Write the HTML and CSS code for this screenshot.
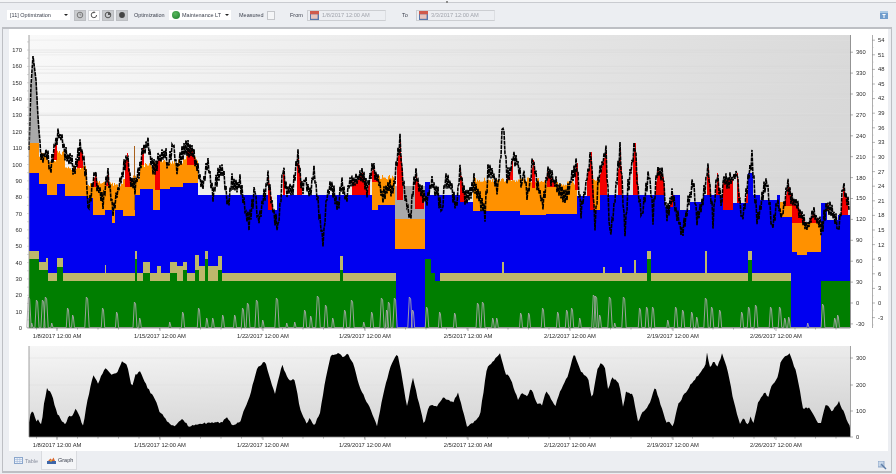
FILE: index.html
```html
<!DOCTYPE html>
<html lang="en">
<head>
  <meta charset="UTF-8" />
  <title>Optimization Graph</title>
  <link rel="stylesheet" href="styles.css">
</head>
<body>
  <div class="app">
    <div class="top-strip"><span class="grip"></span></div>

    <div class="toolbar">
      <div class="combo combo-type">
        <span>[11] Optimization</span>
        <span class="caret"></span>
      </div>

      <div class="btn-group">
        <button class="tool-btn pressed"><svg width="8" height="8" viewBox="0 0 8 8"><circle cx="4" cy="4" r="2.8" fill="none" stroke="#777" stroke-width="1"/><path d="M4 2.4V4H5.4" fill="none" stroke="#777" stroke-width=".7"/></svg></button>
        <button class="tool-btn"><svg width="8" height="8" viewBox="0 0 8 8"><path d="M6.6 4A2.7 2.7 0 1 1 4 1.3" fill="none" stroke="#555" stroke-width="1"/><path d="M3.6 .2L5.6 1.3 3.6 2.6z" fill="#555"/></svg></button>
        <button class="tool-btn pressed"><svg width="8" height="8" viewBox="0 0 8 8"><circle cx="4" cy="4" r="2.8" fill="none" stroke="#555" stroke-width="1"/><path d="M4 4V1.2A2.8 2.8 0 0 1 6.8 4z" fill="#555"/></svg></button>
        <button class="tool-btn pressed"><svg width="8" height="8" viewBox="0 0 8 8"><circle cx="4" cy="4" r="2.9" fill="#444"/></svg></button>
      </div>

      <label class="tool-label label-opt">Optimization</label>
      <div class="combo combo-model">
        <span class="ball"></span>
        <span>Maintenance LT</span>
        <span class="caret"></span>
      </div>

      <label class="tool-label label-measured">Measured</label>
      <span class="check"></span>

      <label class="tool-label label-from">From</label>
      <div class="date-box">
        <svg class="cal" width="9" height="9" viewBox="0 0 9 9"><rect width="9" height="9" fill="#5878ac"/><rect width="9" height="3.4" fill="#cf5a4c"/><rect x="1" y="3.4" width="6.6" height="4.4" fill="#e9c4bc"/></svg>
        <span>1/8/2017 12:00 AM</span>
      </div>

      <label class="tool-label label-to">To</label>
      <div class="date-box">
        <svg class="cal" width="9" height="9" viewBox="0 0 9 9"><rect width="9" height="9" fill="#5878ac"/><rect width="9" height="3.4" fill="#cf5a4c"/><rect x="1" y="3.4" width="6.6" height="4.4" fill="#e9c4bc"/></svg>
        <span>3/3/2017 12:00 AM</span>
      </div>

      <svg class="share" width="8" height="8" viewBox="0 0 8 8"><rect width="8" height="8" fill="#6f9ccc"/><rect y="0" width="8" height="2" fill="#a9c8e4"/><path d="M2.4 3H5.6V4H4.5V7H3.5V4H2.4z" fill="#fff"/></svg>
    </div>

    <div class="main">
      <svg id="chart" class="chart" width="879" height="422" viewBox="9 29 879 422"></svg>

      <div class="tabs">
        <div class="tab">
          <svg width="9" height="7" viewBox="0 0 9 7"><rect x=".5" y=".5" width="8" height="6" fill="#eef3fa" stroke="#8aa6cc"/><path d="M.5 2.5H8.5M.5 4.5H8.5M3.2 .5V6.5M5.8 .5V6.5" stroke="#9db5d6" stroke-width=".6"/></svg>
          <span>Table</span>
        </div>
        <div class="tab active">
          <svg width="9" height="7" viewBox="0 0 9 7"><rect y="4" width="9" height="3" fill="#3d66a8"/><path d="M1 4L3.5 1.5 5 3 6.5 .5 8 4z" fill="#d9662b"/><rect x="3" y="3" width="2" height="1.5" fill="#e3a52f"/></svg>
          <span>Graph</span>
        </div>
        <svg class="corner" width="9" height="9" viewBox="0 0 9 9"><rect width="6" height="6" fill="#c9d8ea" stroke="#7f9cc0" stroke-width=".8"/><path d="M3 3L8 8" stroke="#5a7ba6" stroke-width="1.4"/><path d="M2 5.5L5 2.5" stroke="#7f9cc0" stroke-width=".7"/></svg>
      </div>
    </div>
  </div>

  <script src="app.js"></script>
</body>
</html>
```

FILE: styles.css
```css
html, body {
  margin: 0;
  padding: 0;
  background: #eceef2;
}

.app {
  width: 896px;
  height: 474px;
  display: flex;
  flex-direction: column;
  overflow: hidden;
  background: #eceef2;
  font-family: "Liberation Sans", Arial, sans-serif;
  font-size: 5.5px;
  color: #3a3f4c;
  filter: blur(0.4px);
}

.top-strip {
  height: 2px;
  flex: none;
  background: #f3f4f6;
  border-bottom: 1px solid #c9cbd0;
  position: relative;
}

.grip {
  position: absolute;
  left: 446px;
  top: 1px;
  width: 2px;
  height: 2px;
  background: #8a8a8a;
}

.toolbar {
  height: 24px;
  flex: none;
  display: flex;
  align-items: center;
  padding-left: 7px;
  box-sizing: border-box;
}

.combo {
  height: 10px;
  background: #fff;
  display: flex;
  align-items: center;
  box-sizing: border-box;
  padding: 0 2px 0 3px;
}

.combo-type {
  width: 63px;
}

.combo-model {
  width: 62px;
  margin-left: 5px;
  padding-left: 3px;
}

.caret {
  margin-left: auto;
  border-left: 2px solid transparent;
  border-right: 2px solid transparent;
  border-top: 2px solid #222;
}

.ball {
  width: 8px;
  height: 8px;
  border-radius: 50%;
  background: radial-gradient(circle at 40% 35%, #58b85c, #1c7a2c);
  margin-right: 2px;
}

.btn-group {
  display: flex;
  gap: 2px;
  margin-left: 4px;
}

.tool-btn {
  width: 12px;
  height: 11px;
  padding: 0;
  border: 1px solid #d4d6da;
  background: #fff;
  display: flex;
  align-items: center;
  justify-content: center;
}

.tool-btn.pressed {
  background: #c9cbce;
  border-color: #bcbec2;
}

.tool-label {
  width: 30px;
  white-space: nowrap;
}

.label-opt {
  margin-left: 6px;
}

.label-measured {
  width: 26px;
  margin-left: 8px;
}

.check {
  width: 6px;
  height: 7px;
  flex: none;
  margin-left: 2px;
  background: #f4f5f7;
  border: 1px solid #c4c6ca;
}

.label-from {
  width: 14px;
  margin-left: 15px;
}

.label-to {
  width: 7px;
  margin-left: 16px;
}

.date-box {
  width: 79px;
  height: 11px;
  box-sizing: border-box;
  margin-left: 3px;
  padding-left: 2px;
  display: flex;
  align-items: center;
  border: 1px solid #ccced2;
  border-right-color: #dcdee2;
  color: #a2a5ad;
  font-size: 5.7px;
}

.label-to + .date-box {
  margin-left: 7px;
}

.cal {
  margin-right: 3px;
}

.share {
  margin-left: auto;
  margin-right: 8px;
}

.main {
  flex: 1;
  min-height: 0;
  margin: 0 4px 1px 2px;
  padding: 0 3px 0 6px;
  border: 1px solid #bdbfc4;
  border-width: 2px 1px 2px 1px;
  display: flex;
  flex-direction: column;
}

.chart {
  display: block;
  flex: none;
  background: #fff;
}

.chart text {
  font-family: "Liberation Sans", Arial, sans-serif;
  font-size: 5.8px;
  fill: #2c2c2c;
}

.tabs {
  flex: 1;
  display: flex;
  align-items: flex-start;
}

.tab {
  width: 32px;
  height: 17px;
  margin-top: 1px;
  box-sizing: border-box;
  padding-left: 5px;
  display: flex;
  align-items: center;
  gap: 2px;
  color: #8a90a0;
}

.tab.active {
  width: 36px;
  height: 19px;
  margin-top: 0;
  background: #f4f5f7;
  border: 1px solid #d9dbdf;
  border-top: none;
  color: #3a3f4c;
}

.corner {
  margin-left: auto;
  margin-top: 10px;
  margin-right: 1px;
}
```

FILE: app.js
```js
// page pixels are used as chart units, the svg viewBox lines them up
const PLOT_LEFT = 29, PLOT_RIGHT = 850, MAIN_TOP = 35, MAIN_BOTTOM = 328, LOWER_TOP = 346, LOWER_BOTTOM = 437;

const BLACK_LINE = [[29,150],[31,85],[33,56],[36,80],[38,117],[40,145],[42,158],[45,155],[48,153],[50,173],[55,143],[58,135],[62,138],[65,153],[70,160],[75,170],[80,148],[83,153],[87,183],[88,210],[92,190],[95,172],[98,188],[103,200],[108,172],[112,203],[113,210],[118,190],[123,173],[127,153],[130,177],[135,187],[140,167],[143,148],[148,142],[153,170],[158,160],[165,152],[168,167],[173,143],[177,170],[182,153],[187,148],[192,150],[197,167],[202,187],[208,162],[213,197],[218,173],[223,172],[228,203],[232,180],[237,187],[240,182],[245,210],[249,223],[255,190],[258,223],[265,193],[268,177],[273,210],[278,230],[283,170],[287,190],[292,193],[298,157],[302,190],[305,180],[310,195],[314,172],[318,205],[323,243],[327,195],[332,185],[338,210],[342,180],[346,200],[350,180],[355,183],[362,173],[367,190],[373,167],[378,180],[383,197],[388,187],[393,190],[400,142],[403,183],[407,203],[410,222],[413,190],[416,175],[420,190],[427,200],[432,180],[438,195],[442,213],[445,180],[450,183],[456,207],[460,170],[465,200],[470,193],[474,182],[480,200],[485,213],[488,172],[493,173],[498,190],[503,122],[507,177],[510,172],[513,155],[517,162],[522,185],[523,168],[528,197],[533,160],[537,183],[543,207],[547,172],[553,180],[560,190],[565,200],[570,183],[577,163],[581,213],[585,190],[591,152],[595,227],[598,182],[606,150],[610,238],[615,198],[620,150],[625,233],[628,188],[635,143],[638,190],[642,217],[649,170],[653,217],[657,170],[663,177],[667,217],[672,192],[677,217],[683,232],[687,208],[693,182],[697,217],[703,200],[708,167],[713,220],[717,173],[722,210],[723,180],[732,180],[737,173],[742,222],[752,157],[757,220],[767,178],[772,230],[777,203],[782,217],[788,183],[792,200],[798,207],[807,227],[813,213],[822,228],[827,203],[837,223],[838,237],[843,188],[850,207]];

// [end x, y] runs
const BLUE_TOP = [[39,173],[47,184],[57,195],[65,184],[87,196],[93,198],[105,215],[112,210],[115,223],[123,210],[135,216],[140,195],[153,189],[160,210],[170,189],[183,187],[198,183],[268,195],[277,210],[372,195],[378,210],[395,205],[425,249],[430,182],[460,195],[473,202],[520,211],[546,215],[577,214],[590,196],[600,210],[665,195],[673,207],[680,195],[690,210],[703,202],[723,195],[733,210],[748,203],[753,173],[760,195],[777,200],[780,195],[792,217],[797,252],[807,255],[821,252],[827,203],[838,220],[851,215]];

// [start x, end x, top y]
const ORANGE = [[29,39,143],[39,47,155],[47,57,160],[57,65,153],[65,87,168],[87,93,185],[93,112,183],[112,123,185],[123,135,178],[135,140,177],[140,153,165],[153,183,162],[183,198,158],[372,395,177],[395,425,219],[473,546,180],[546,577,183],[590,600,180],[780,792,202],[792,821,223]];

// [start x, end x, bottom y]
const RED = [[53,57,160],[77,83,168],[93,98,187],[106,109,186],[125,131,187],[141,144,165],[155,160,190],[187,195,165],[268,277,210],[283,285,195],[297,302,195],[352,370,195],[372,378,182],[397,403,200],[415,424,209],[438,441,195],[460,467,202],[507,513,180],[532,535,188],[547,555,187],[575,578,190],[587,595,210],[600,607,195],[618,622,195],[633,638,195],[655,665,195],[667,673,207],[707,711,195],[715,720,195],[723,733,210],[737,740,203],[743,748,203],[782,792,206],[792,807,223],[810,821,223],[827,830,210],[838,848,215]];

// [end x, tan top, green top], a missing tan has both the same
const TAN = [[39,251,259],[46,262,270],[48,258,270],[57,273,281],[63,258,267],[105,273,281],[106,265,281],[135,273,281],[137,251,259],[143,273,281],[150,262,273],[157,273,281],[161,266,281],[170,273,281],[177,262,273],[183,266,281],[187,262,270],[195,273,281],[199,255,270],[205,266,281],[208,251,259],[218,266,281],[222,256,270],[340,273,281],[343,256,270],[396,273,281],[425,329,329],[431,259,259],[435,273,273],[440,281,281],[502,273,281],[504,262,281],[603,273,281],[605,267,281],[620,273,281],[622,267,281],[634,273,281],[636,260,281],[647,273,281],[651,251,259],[705,273,281],[707,251,281],[748,273,281],[752,251,260],[791,273,281],[821,329,329],[851,281,281]];

const GREY_PEAKS = [[29,297],[32,323],[37,300],[43,300],[46,297],[52,323],[68,308],[73,315],[87,297],[103,308],[117,312],[135,302],[140,318],[170,322],[183,312],[199,308],[207,318],[213,318],[223,315],[235,315],[243,308],[248,303],[257,300],[263,320],[277,298],[287,323],[295,322],[305,310],[311,316],[318,296],[326,305],[333,318],[345,310],[352,300],[364,322],[372,312],[382,298],[387,310],[389,302],[395,298],[410,297],[413,310],[427,307],[440,312],[455,313],[478,303],[483,302],[493,318],[497,318],[521,313],[529,313],[543,308],[558,312],[567,310],[572,308],[580,318],[594,295],[596,296],[600,315],[610,297],[615,323],[624,297],[640,308],[647,307],[653,307],[668,320],[676,307],[683,310],[692,312],[697,317],[706,298],[712,307],[720,310],[742,312],[749,307],[756,305],[771,307],[780,307],[785,318],[789,317],[808,323],[823,304],[835,318],[838,315]];

const LOWER_AREA = [[29,422],[31,411],[33,412],[37,423],[38,419],[42,426],[43,408],[47,388],[52,395],[57,413],[65,425],[69,415],[72,417],[76,408],[80,418],[83,426],[88,398],[93,375],[98,383],[105,367],[112,375],[117,373],[122,362],[127,365],[132,388],[135,375],[140,371],[147,387],[157,403],[160,413],[165,417],[168,423],[175,426],[183,419],[188,426],[200,424],[213,422],[220,423],[227,418],[233,426],[240,422],[243,413],[250,395],[257,368],[265,361],[270,378],[275,394],[282,364],[287,377],[290,380],[295,380],[300,410],[307,424],[310,417],[314,426],[320,412],[325,382],[331,355],[340,353],[343,358],[347,353],[353,363],[360,388],[370,408],[377,426],[383,395],[390,368],[397,353],[400,365],[407,407],[413,377],[417,395],[424,425],[429,405],[437,407],[443,397],[453,403],[458,392],[467,426],[473,423],[480,415],[487,368],[500,353],[505,373],[510,377],[518,400],[522,393],[527,397],[531,388],[537,403],[542,405],[546,390],[555,407],[560,392],[567,378],[574,353],[580,370],[588,378],[592,400],[597,370],[601,362],[605,368],[608,390],[612,377],[619,383],[623,407],[626,392],[633,395],[638,422],[642,412],[647,408],[650,402],[655,387],[660,402],[666,422],[670,422],[673,426],[678,405],[685,393],[692,383],[698,375],[705,367],[707,353],[710,368],[714,360],[717,368],[722,354],[727,368],[734,403],[740,424],[743,418],[748,425],[751,414],[753,426],[758,402],[765,392],[768,398],[772,385],[778,377],[781,360],[790,353],[797,375],[803,408],[809,408],[818,422],[821,423],[826,403],[832,412],[839,401],[849,425]];

const DATE_LABELS = [[57,"1/8/2017"],[160,"1/15/2017"],[263,"1/22/2017"],[365,"1/29/2017"],[468,"2/5/2017"],[570,"2/12/2017"],[673,"2/19/2017"],[776,"2/26/2017"]];

let seed = 17;
function rand() {
  seed = (seed * 16807) % 2147483647;
  return seed / 2147483647;
}

function interp(points, x) {
  for (let i = 1; i < points.length; i++) {
    if (x <= points[i][0]) {
      const [x0, y0] = points[i - 1], [x1, y1] = points[i];
      return y0 + (y1 - y0) * (x - x0) / (x1 - x0);
    }
  }
  return points[points.length - 1][1];
}

function runAt(runs, x) {
  return runs.find(r => x < r[0]);
}

function column(x, top, bottom) {
  return bottom > top ? `M${x} ${top}h1V${bottom}h-1z` : "";
}

function gridLines(top, bottom, zero, step) {
  let out = "";
  for (let y = zero; y >= top; y -= step) {
    if (y <= bottom) out += `M${PLOT_LEFT} ${y}H${PLOT_RIGHT}`;
  }
  return out;
}

function ticks(x, top, bottom, zero, step, len) {
  let out = "";
  for (let y = zero + step * 5; y >= top; y -= step) {
    if (y <= bottom) out += `M${x} ${y}h${len}`;
  }
  return out;
}

function label(x, y, text, anchor) {
  return `<text x="${x}" y="${y + 2}" text-anchor="${anchor || "start"}">${text}</text>`;
}

function drawMainStack() {
  const paths = { grey: "", orange: "", red: "", blue: "", tan: "", green: "" };
  const line = [];

  for (let x = PLOT_LEFT; x < PLOT_RIGHT; x++) {
    const base = interp(BLACK_LINE, x);
    // every other sample swings the opposite way, gives the spiky look
    const swing = (x % 2 ? 1 : -1) * (2 + rand() * 7);
    line.push([x, base + (x < 40 ? 0 : swing)]);

    const blue = runAt(BLUE_TOP, x)[1];
    const tan = runAt(TAN, x);
    const orange = ORANGE.find(r => x >= r[0] && x < r[1]);
    const red = RED.find(r => x >= r[0] && x < r[1]);

    if (x < 39) paths.grey += column(x, base, 143);
    if (x >= 395 && x < 425) paths.grey += column(x, 186, 219);
    if (orange) {
      const wobble = orange[2] > 200 || x < 39 ? 0 : (rand() - 0.5) * 5;
      paths.orange += column(x, orange[2] + wobble, blue);
    }
    if (red) paths.red += column(x, base, red[2]);
    paths.blue += column(x, blue, MAIN_BOTTOM);
    if (tan[1] < MAIN_BOTTOM) {
      paths.tan += column(x, tan[1], tan[2]);
      paths.green += column(x, tan[2], MAIN_BOTTOM);
    }
  }

  let greyLine = `M${PLOT_LEFT} ${MAIN_BOTTOM}`;
  GREY_PEAKS.forEach(([x, y]) => {
    const w = 0.8 + (MAIN_BOTTOM - y) / 22;
    greyLine += `L${x - w} ${MAIN_BOTTOM - 0.5}L${x - w * 0.3} ${y}L${x + w * 0.3} ${y + 2}L${x + w} ${MAIN_BOTTOM - 0.5}`;
  });
  greyLine += `L${PLOT_RIGHT} ${MAIN_BOTTOM - 0.5}`;

  return `
    <path d="${paths.grey}" fill="#a9a9a9"/>
    <path d="${paths.orange}" fill="#ff9100"/>
    <path d="${paths.red}" fill="#f40000"/>
    <path d="${paths.blue}" fill="#0000f0"/>
    <path d="${paths.tan}" fill="#bdb76b"/>
    <path d="${paths.green}" fill="#007e00"/>
    <path d="M134 146h1V210h-1z" fill="#a8601c"/>
    <path d="${greyLine}" fill="none" stroke="#a8a8a8" stroke-width=".9"/>
    <path d="M${line.map(p => p.join(" ")).join("L")}" fill="none" stroke="#000" stroke-width="1.6" stroke-dasharray="4 0.8"/>`;
}

function drawLowerArea() {
  let top = "";
  for (let x = PLOT_LEFT; x < PLOT_RIGHT; x += 1.5) {
    top += `L${x} ${interp(LOWER_AREA, x) + (rand() - 0.5) * 2}`;
  }
  return `<path d="M${PLOT_LEFT} ${LOWER_BOTTOM}${top}L${PLOT_RIGHT} 428V${LOWER_BOTTOM}z" fill="#000"/>`;
}

function drawDateAxis(axisY, textY) {
  let tickPath = "", texts = "";
  for (let x = 36.5; x < PLOT_RIGHT; x += 20.5) tickPath += `M${x} ${axisY}v1.5`;
  DATE_LABELS.forEach(([x, date]) => {
    tickPath += `M${x} ${axisY}v3`;
    texts += label(x, textY, `${date} 12:00 AM`, "middle");
  });
  return `<path d="${tickPath}" stroke="#777" stroke-width=".6" fill="none"/>${texts}`;
}

function drawAxes() {
  let svg = "";

  // left axis of the main plot
  for (let v = 0; v <= 170; v += 10) {
    svg += label(22, 328 - 1.635 * v, v, "end");
  }
  svg += `<path d="M29 ${MAIN_TOP}V${MAIN_BOTTOM}H850" stroke="#8a8a8a" stroke-width=".8" fill="none"/>`;
  svg += `<path d="${ticks(27, MAIN_TOP, MAIN_BOTTOM, 328, 8.175, 2)}" stroke="#aaa" stroke-width=".5"/>`;

  // first right axis
  for (let v = -30; v <= 360; v += 30) {
    svg += label(856, 303 - 0.697 * v, v);
  }
  svg += `<path d="M850.5 ${MAIN_TOP}V${MAIN_BOTTOM}" stroke="#777" stroke-width=".8"/>`;
  svg += `<path d="${ticks(850, MAIN_TOP, MAIN_BOTTOM, 303, 20.9, 3)}" stroke="#777" stroke-width=".6"/>`;

  // second right axis
  for (let v = -3; v <= 54; v += 3) {
    svg += label(878, 303 - 4.87 * v, v);
  }
  svg += `<path d="M872.5 ${MAIN_TOP}V${MAIN_BOTTOM}" stroke="#999" stroke-width=".8"/>`;
  svg += `<path d="${ticks(872, MAIN_TOP, MAIN_BOTTOM, 303, 14.6, 3)}" stroke="#888" stroke-width=".6"/>`;
  svg += `<path d="${ticks(872, MAIN_TOP, MAIN_BOTTOM, 310.3, 14.6, 1.5)}" stroke="#aaa" stroke-width=".5"/>`;

  // lower plot
  [[0, 437], [100, 411], [200, 385], [300, 358]].forEach(([v, y]) => {
    svg += label(856, y, v);
  });
  svg += `<path d="M29 ${LOWER_TOP}V${LOWER_BOTTOM}H850.5V${LOWER_TOP}" stroke="#8a8a8a" stroke-width=".8" fill="none"/>`;
  svg += `<path d="M850 437h3M850 411h3M850 385h3M850 358h3" stroke="#777" stroke-width=".6"/>`;

  svg += drawDateAxis(MAIN_BOTTOM, 336);
  svg += drawDateAxis(LOWER_BOTTOM, 445);
  return svg;
}

function drawChart() {
  const width = PLOT_RIGHT - PLOT_LEFT;
  document.getElementById("chart").innerHTML = `
    <defs>
      <linearGradient id="mainBg" x1="0" y1="0" x2="1" y2="0.25">
        <stop offset="0" stop-color="#f9f9f9"/>
        <stop offset="1" stop-color="#d8d8d8"/>
      </linearGradient>
      <linearGradient id="lowerBg" x1="0" y1="0" x2="0.35" y2="1">
        <stop offset="0" stop-color="#f6f6f6"/>
        <stop offset="1" stop-color="#d4d4d4"/>
      </linearGradient>
    </defs>
    <rect x="${PLOT_LEFT}" y="${MAIN_TOP}" width="${width}" height="${MAIN_BOTTOM - MAIN_TOP}" fill="url(#mainBg)"/>
    <rect x="${PLOT_LEFT}" y="${LOWER_TOP}" width="${width}" height="${LOWER_BOTTOM - LOWER_TOP}" fill="url(#lowerBg)"/>
    <path d="${gridLines(MAIN_TOP, MAIN_BOTTOM, 328, 16.35)}${gridLines(MAIN_TOP, MAIN_BOTTOM, 303, 20.9)}" stroke="#d6d6d6" stroke-width=".5"/>
    <path d="${gridLines(MAIN_TOP, 200, 303, 14.6)}" stroke="#e0e0e0" stroke-width=".4"/>
    <path d="M29 411H850M29 385H850M29 358H850" stroke="#dedede" stroke-width=".5"/>
    ${drawMainStack()}
    ${drawLowerArea()}
    ${drawAxes()}`;
}

drawChart();
```
